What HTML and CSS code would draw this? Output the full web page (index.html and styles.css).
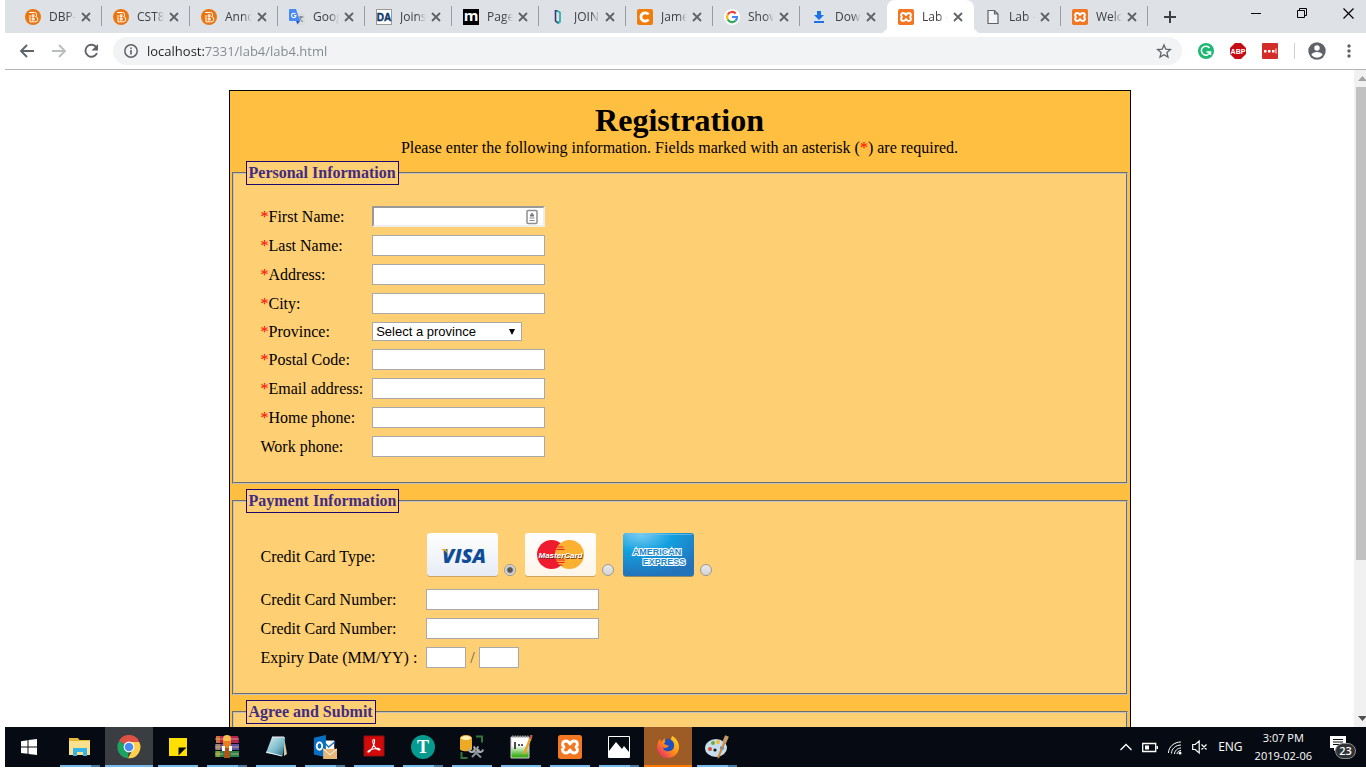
FILE: index.html
```html
<!DOCTYPE html>
<html lang="en">
<head>
<meta charset="utf-8">
<title>Lab 4</title>
<link rel="stylesheet" href="styles.css">
</head>
<body>
<svg class="defs" aria-hidden="true">
  <symbol id="x" viewBox="0 0 16 16"><path d="M4 4l8 8M12 4l-8 8" stroke="#5f6368" stroke-width="1.8"/></symbol>
  <symbol id="bright" viewBox="0 0 16 16"><circle cx="8" cy="8" r="8" fill="#ea7612"/><path d="M4 3.500H9.500a2.200 2.200 0 0 1 1.200 4A2.600 2.600 0 0 1 9.500 12.800H5V6M7.200 5.800H9v2H7.200zM7.200 9.200H9.200v1.800H7.200z" fill="none" stroke="#fff" stroke-width="1"/></symbol>
  <symbol id="xampp" viewBox="0 0 24 24"><rect width="24" height="24" rx="2.500" fill="#f37623"/><path d="M8 6c2 0 3 1.200 4 3 1-1.800 2-3 4-3 3.500 0 4.500 3.500 2 6 2.500 2.500 1.500 6-2 6-2 0-3-1.200-4-3-1 1.800-2 3-4 3-3.500 0-4.500-3.500-2-6-2.500-2.500-1.500-6 2-6z" fill="none" stroke="#fff" stroke-width="2.900" stroke-linejoin="round"/></symbol>
</svg>

<header class="tabstrip">
  <nav class="tabs" aria-label="Tabs">
    <div class="tab"><svg class="i16"><use href="#bright"/></svg><a class="title" href="#">DBP-</a><button class="close" aria-label="Close"><svg class="i16"><use href="#x"/></svg></button></div>
    <div class="tab wide"><svg class="i16"><use href="#bright"/></svg><a class="title" href="#">CST8</a><button class="close" aria-label="Close"><svg class="i16"><use href="#x"/></svg></button></div>
    <div class="tab wide"><svg class="i16"><use href="#bright"/></svg><a class="title" href="#">Anno</a><button class="close" aria-label="Close"><svg class="i16"><use href="#x"/></svg></button></div>
    <div class="tab"><svg class="i16" viewBox="0 0 16 16"><path d="M6 4h9a1 1 0 0 1 1 1v10a1 1 0 0 1-1 1H9z" fill="#dcdcdc"/><path d="M9.500 8h5M12 7v1c0 2-1 3.500-3 4.500M10.500 9.500c.5 1.500 2 2.500 3.500 3" fill="none" stroke="#607988"/><path d="M1 0h6l4 12H1a1 1 0 0 1-1-1V1a1 1 0 0 1 1-1z" fill="#4a8af4"/><path d="M7 12h4l-2.500 3.500z" fill="#2a56c6"/><path d="M6.500 5A2.200 2.200 0 1 0 7 6.500H5" fill="none" stroke="#fff" stroke-width="1.100"/></svg><a class="title" href="#">Goog</a><button class="close" aria-label="Close"><svg class="i16"><use href="#x"/></svg></button></div>
    <div class="tab"><svg class="i16" viewBox="0 0 16 16"><rect x=".5" y=".5" width="15" height="15" fill="#fff" stroke="#999"/><text x="8" y="12" class="logo-da">DA</text></svg><a class="title" href="#">Joins</a><button class="close" aria-label="Close"><svg class="i16"><use href="#x"/></svg></button></div>
    <div class="tab"><svg class="i16" viewBox="0 0 16 16"><rect width="16" height="16"/><text x="8" y="12" class="logo-m">m</text></svg><a class="title" href="#">Page</a><button class="close" aria-label="Close"><svg class="i16"><use href="#x"/></svg></button></div>
    <div class="tab"><svg class="i16" viewBox="0 0 16 16"><path d="M7.500 1.800H5.500V12l2.500 2.200" fill="none" stroke="#3b3a7e" stroke-width="1.600"/><path d="M7 1.800L10 3.500v9.300H8.500V15" fill="none" stroke="#17b0a3" stroke-width="1.600"/></svg><a class="title" href="#">JOIN</a><button class="close" aria-label="Close"><svg class="i16"><use href="#x"/></svg></button></div>
    <div class="tab"><svg class="i16" viewBox="0 0 16 16"><rect width="16" height="16" rx="2" fill="#f07c0b"/><path d="M11.500 5.500A4.200 4.200 0 1 0 11.500 10.500" fill="none" stroke="#fff" stroke-width="2.800"/></svg><a class="title" href="#">Jame</a><button class="close" aria-label="Close"><svg class="i16"><use href="#x"/></svg></button></div>
    <div class="tab"><svg class="i16" viewBox="0 0 16 16"><circle cx="8" cy="8" r="8" fill="#fff"/><g fill="none" stroke-width="2.200"><path d="M3.700 5.500A5 5 0 0 1 11.700 4.500" stroke="#ea4335"/><path d="M3.700 5.500a5 5 0 0 0 0 5" stroke="#fbbc05"/><path d="M3.700 10.500a5 5 0 0 0 7.800 1.300" stroke="#34a853"/><path d="M11.500 11.800A5 5 0 0 0 13 8H8" stroke="#4285f4"/></g></svg><a class="title" href="#">Show</a><button class="close" aria-label="Close"><svg class="i16"><use href="#x"/></svg></button></div>
    <div class="tab plain"><svg class="i16" viewBox="0 0 16 16"><path d="M6 2h4v4h3l-5 5-5-5h3zM3 12h10v2H3z" fill="#1a73e8"/></svg><a class="title" href="#">Down</a><button class="close" aria-label="Close"><svg class="i16"><use href="#x"/></svg></button></div>
    <div class="tab plain active"><svg class="i16"><use href="#xampp"/></svg><a class="title" href="#" aria-current="page">Lab -</a><button class="close" aria-label="Close"><svg class="i16"><use href="#x"/></svg></button></div>
    <div class="tab"><svg class="i16" viewBox="0 0 16 16"><path d="M3 1.500h6.500L13 5v9.500H3zM9.500 1.500V5H13" fill="#f4f5f6" stroke="#5f6368" stroke-width="1.200"/></svg><a class="title" href="#">Lab -</a><button class="close" aria-label="Close"><svg class="i16"><use href="#x"/></svg></button></div>
    <div class="tab"><svg class="i16"><use href="#xampp"/></svg><a class="title" href="#">Welc</a><button class="close" aria-label="Close"><svg class="i16"><use href="#x"/></svg></button></div>
    <button class="newtab" aria-label="New tab"><svg width="12" height="12"><path d="M6 0v12M0 6h12" stroke="#3c4043" stroke-width="2"/></svg></button>
  </nav>
  <div class="winctl">
    <button aria-label="Minimize"><svg width="11" height="11"><path d="M0 5.500h10" stroke="#000"/></svg></button>
    <button aria-label="Restore"><svg width="11" height="11"><path d="M.5 2.500h7v7h-7zM2.500 2.500v-2h7v7h-2" fill="none" stroke="#000"/></svg></button>
    <button aria-label="Close window"><svg width="11" height="11"><path d="M.5.5l10 10M10.500.5l-10 10" stroke="#000" stroke-width="1.200"/></svg></button>
  </div>
</header>

<div class="toolbar">
  <div class="nav">
    <button aria-label="Back"><svg class="i16" viewBox="0 0 16 16"><path d="M15 8H2M8 2L2 8l6 6" fill="none" stroke="#5f6368" stroke-width="1.900"/></svg></button>
    <button aria-label="Forward"><svg class="i16" viewBox="0 0 16 16"><path d="M1 8h13M8 2l6 6-6 6" fill="none" stroke="#babcbe" stroke-width="1.900"/></svg></button>
    <button aria-label="Reload"><svg class="i16" viewBox="0 0 16 16"><path d="M13.500 4.500A6 6 0 1 0 14 10" fill="none" stroke="#5f6368" stroke-width="1.900"/><path d="M15 1v6.500H8.500z" fill="#5f6368"/></svg></button>
  </div>
  <div class="omnibox">
    <svg class="i16" viewBox="0 0 16 16"><circle cx="8" cy="8" r="6.200" fill="none" stroke="#5f6368" stroke-width="1.500"/><path d="M8 7v4.500M8 4.500v1.600" stroke="#5f6368" stroke-width="1.600"/></svg>
    <input class="url" type="text" aria-label="Address" value="localhost:7331/lab4/lab4.html">
    <button aria-label="Bookmark"><svg class="i16" viewBox="0 0 16 16"><path d="M8 2l1.800 4.200 4.600.4-3.500 3 1.100 4.500L8 11.700l-4 2.400 1.100-4.500-3.500-3 4.600-.4z" fill="none" stroke="#5f6368" stroke-width="1.300"/></svg></button>
  </div>
  <div class="ext">
    <button aria-label="Grammarly"><svg class="i16" viewBox="0 0 16 16"><circle cx="8" cy="8" r="8" fill="#1eb774"/><path d="M11.500 5A4.500 4.500 0 1 0 12 9.500M8.500 9h4v3" fill="none" stroke="#fff" stroke-width="1.500"/></svg></button>
    <button aria-label="AdBlock"><svg class="i16" viewBox="0 0 16 16"><path d="M5 0h6l5 5v6l-5 5H5l-5-5V5z" fill="#c70d14"/><text x="8" y="11" class="logo-abp">ABP</text></svg></button>
    <button aria-label="LastPass"><svg class="i16" viewBox="0 0 16 16"><rect width="16" height="16" rx="1" fill="#d32d27"/><path d="M2 7h2.500v2.500H2zM6 7h2.500v2.500H6zM10 7h2.500v2.500H10zM13.500 5.500h1v5h-1z" fill="#fff"/></svg></button>
  </div>
  <div class="profile">
    <button aria-label="Profile"><svg width="18" height="18" viewBox="0 0 18 18"><circle cx="9" cy="9" r="8.700" fill="#5f6368"/><circle cx="9" cy="6" r="2.700" fill="#fff"/><path d="M3.500 13c0-2 3.500-3 5.500-3s5.500 1 5.500 3a7 7 0 0 1-11 0z" fill="#fff"/></svg></button>
    <button aria-label="Menu"><svg class="i16" viewBox="0 0 16 16"><g fill="#5f6368"><circle cx="8" cy="3" r="1.700"/><circle cx="8" cy="8" r="1.700"/><circle cx="8" cy="13" r="1.700"/></g></svg></button>
  </div>
</div>

<main class="viewport">
  <div class="page">
    <form class="form">
      <h1>Registration</h1>
      <p class="intro">Please enter the following information. Fields marked with an asterisk (<span class="req">*</span>) are required.</p>
      <fieldset>
        <legend>Personal Information</legend>
        <div class="fields">
          <label for="first"><span class="req">*</span>First Name:</label>
          <div class="autofill"><input id="first" class="text first" type="text"><svg class="key" viewBox="0 0 12 16"><rect x="1" y="1.500" width="10" height="13" rx="1" fill="#fff" stroke="#8e8e8e" stroke-width="1.500"/><path d="M4 5.500h4v2H4zM5.200 4h1.600v2H5.200z" fill="#777"/><path d="M3.500 9h5M3.500 11.500h5" stroke="#888" stroke-width="1.200"/></svg></div>
          <label for="last"><span class="req">*</span>Last Name:</label><input id="last" class="text" type="text">
          <label for="addr"><span class="req">*</span>Address:</label><input id="addr" class="text" type="text">
          <label for="city"><span class="req">*</span>City:</label><input id="city" class="text" type="text">
          <label for="prov"><span class="req">*</span>Province:</label>
          <select id="prov"><option>Select a province</option></select>
          <label for="post"><span class="req">*</span>Postal Code:</label><input id="post" class="text" type="text">
          <label for="email"><span class="req">*</span>Email address:</label><input id="email" class="text" type="text">
          <label for="home"><span class="req">*</span>Home phone:</label><input id="home" class="text" type="text">
          <label for="work">Work phone:</label><input id="work" class="text" type="text">
        </div>
      </fieldset>
      <fieldset>
        <legend>Payment Information</legend>
        <div class="fields payment">
          <span id="cardtype">Credit Card Type:</span>
          <div class="cards" role="radiogroup" aria-labelledby="cardtype">
            <label for="visa"><svg class="card" role="img" aria-label="Visa" viewBox="0 0 72 44">
              <defs><linearGradient id="gv" x2="0" y2="1"><stop stop-color="#fff"/><stop offset="1" stop-color="#e6ecf5"/></linearGradient></defs>
              <rect x="1" y="1" width="71" height="43" rx="3" fill="#cda55c"/><rect x="1" width="71" height="43" rx="3" fill="url(#gv)"/>
              <text x="38" y="30" class="logo-visa">VISA</text><path d="M14.500 16h5.500l2.500 6c-2-3-4-5-8-6z" fill="#f7a51b"/></svg></label>
            <input id="visa" type="radio" name="card" checked>
            <label for="mc"><svg class="card" role="img" aria-label="MasterCard" viewBox="0 0 72 44">
              <defs><linearGradient id="gm" x2="0" y2="1"><stop stop-color="#fff"/><stop offset="1" stop-color="#fdf5e8"/></linearGradient></defs>
              <rect x="1" y="1" width="71" height="43" rx="3" fill="#cda55c"/><rect x="1" width="71" height="43" rx="3" fill="url(#gm)"/>
              <circle cx="27.500" cy="21.500" r="14.500" fill="#ee1c2e"/><circle cx="45.500" cy="21.500" r="14.500" fill="#fcb131"/>
              <path d="M33.500 14h6M32.500 16.500h8M32 27h9M32.500 29.500h8M34.500 32h4" stroke="#ee1c2e"/>
              <text x="37" y="25.500" class="logo-mc shade">MasterCard</text><text x="36.500" y="24.500" class="logo-mc">MasterCard</text></svg></label>
            <input id="mc" type="radio" name="card">
            <label for="amex"><svg class="card" role="img" aria-label="American Express" viewBox="0 0 72 44">
              <defs><radialGradient id="ga" cx=".25" cy="0" r="1"><stop stop-color="#7fd0f4"/><stop offset=".45" stop-color="#12a0df"/><stop offset="1" stop-color="#2373bb"/></radialGradient></defs>
              <rect x="1" y="1" width="71" height="43" rx="3" fill="#8f8e65"/><rect x="1" width="71" height="43" rx="3" fill="url(#ga)"/>
              <path d="M3 1.500h67" stroke="#73bce7" stroke-width=".8"/>
              <text x="35" y="21.500" class="logo-amex">AMERICAN</text><text x="42" y="32" class="logo-amex">EXPRESS</text></svg></label>
            <input id="amex" type="radio" name="card">
          </div>
          <label for="cc1">Credit Card Number:</label><input id="cc1" class="text" type="text">
          <label for="cc2">Credit Card Number:</label><input id="cc2" class="text" type="text">
          <label for="mm">Expiry Date (MM/YY) :</label>
          <div class="expiry"><input id="mm" class="text" type="text"><span>/</span><input class="text" type="text" aria-label="Expiry year"></div>
        </div>
      </fieldset>
      <fieldset>
        <legend>Agree and Submit</legend>
        <div class="fields"></div>
      </fieldset>
    </form>
  </div>
  <div class="scrollbar" aria-hidden="true">
    <svg width="17" height="17"><path d="M4 11h9L8.500 6z" fill="#a3a3a3"/></svg>
    <div class="track"><div class="thumb"></div></div>
    <svg width="17" height="17"><path d="M4 6h9l-4.500 5z" fill="#505050"/></svg>
  </div>
</main>

<footer class="taskbar">
  <div class="apps">
    <button class="app start" aria-label="Start"><svg class="i24" viewBox="0 0 24 24"><path d="M4 6.300l6.500-1V11.500H4zM11.500 5.100L20 4v7.500h-8.500zM4 12.500h6.500v6.300L4 17.900zM11.500 12.500H20V20l-8.500-1.100z" fill="#fff"/></svg></button>
    <button class="app run multi" aria-label="File Explorer"><svg class="i24" viewBox="0 0 24 24"><path d="M1 3h9l1.500 2H22v4H1z" fill="#e8b931"/><path d="M1 6h21v14H1z" fill="#fbe08e"/><path d="M5 13h14v8h-4v-4H9v4H5z" fill="#35b4e8"/></svg></button>
    <button class="app run current" aria-label="Chrome"><svg class="i24" viewBox="0 0 24 24"><path d="M12 12L2 6a11.300 11.300 0 0 1 20 0z" fill="#dd5144"/><path d="M12 12L2.100 6A11.300 11.300 0 0 0 11 23.300z" fill="#1ca261"/><path d="M12 7h10.200A11.300 11.300 0 0 1 11 23.300L16 14z" fill="#ffd04b"/><path d="M2.200 6A11.300 11.300 0 0 1 22.200 7H12z" fill="#dd5144"/><circle cx="12" cy="12" r="5.400" fill="#fff"/><circle cx="12" cy="12" r="4.300" fill="#4a8af4"/></svg></button>
    <button class="app run" aria-label="Sticky Notes"><svg class="i24" viewBox="0 0 24 24"><path d="M3 3h18v18H3z" fill="#ffe000"/><path d="M12.500 12.500H20.500l-8 8z" fill="#060a12"/></svg></button>
    <button class="app run multi" aria-label="WinRAR"><svg class="i24" viewBox="0 0 24 24"><path d="M1 1h22l1 7H1z" fill="#b52452"/><path d="M0 9h24v6H0z" fill="#5952a3"/><path d="M0 16h24v6H0z" fill="#27834b"/><path d="M0 4h8M16 4h8M0 12h8M16 12h8M0 19h8M16 19h8" stroke="#dfb18b" stroke-width=".8"/><path d="M2 1v7M4 1v7M2 9v6M4 9v6M2 16v6M4 16v6" stroke="#e6ba35"/><path d="M9 1h6v22H9z" fill="#a9541d"/><circle cx="12" cy="4" r="4" fill="#f7c04d"/><path d="M8 6h8v7H8z" fill="#e7811f"/><path d="M7 11h3v5H7zM14 11h3v5h-3z" fill="#fff"/></svg></button>
    <button class="app run" aria-label="Notepad"><svg class="i24" viewBox="0 0 24 24"><defs><linearGradient id="np" x2="1" y2="1"><stop stop-color="#d9f2f5"/><stop offset=".6" stop-color="#78b8c8"/><stop offset="1" stop-color="#23657b"/></linearGradient></defs><path d="M20 2l3 17-3 2z" fill="#d9c9a0"/><path d="M8 2h13l-2 19-17-3z" fill="url(#np)"/><path d="M8 2h12M2 17l16 4" stroke="#f3f3f3"/></svg></button>
    <button class="app run multi" aria-label="Outlook"><svg class="i24" viewBox="0 0 26 26"><path d="M12 6h11v11H12z" fill="#fff"/><path d="M13 9l4 4 7-6" stroke="#1572c4" stroke-width="1.500" fill="none"/><path d="M1 3l13-3v24L1 21z" fill="#0870c4"/><ellipse cx="7" cy="12" rx="3" ry="4" fill="none" stroke="#fff" stroke-width="2"/><path d="M11 15h15v11H11z" fill="#e8b777"/><path d="M11 15l7.500 6.500L26 15" fill="none" stroke="#fff"/></svg></button>
    <button class="app run" aria-label="Acrobat"><svg class="i24" viewBox="0 0 24 24"><path d="M2 1h20v20H2z" fill="#d20a0a" stroke="#8b1010"/><path d="M11 5c2-2 2 2 .7 5C10 14 7 18 6 17s4-3 8-3.500 5 1.500 3 1.500-5.500-4-6-7c-.3-1.500-.2-2.500 0-3z" fill="none" stroke="#fff" stroke-width="1.100"/></svg></button>
    <button class="app run multi" aria-label="Text editor"><svg class="i24" viewBox="0 0 24 24"><circle cx="12" cy="12" r="12" fill="#079b90"/><text x="12" y="18" class="logo-t">T</text></svg></button>
    <button class="app run" aria-label="SQL tools"><svg class="i24" viewBox="0 0 24 24"><path d="M16 1.500h6v6M1.500 17v6h6" fill="none" stroke="#32753a" stroke-width="2"/><path d="M0 3v11c0 3 12 3 12 0V3z" fill="#edaa22"/><ellipse cx="6" cy="3" rx="5.500" ry="2.500" fill="#fff0b8" stroke="#e3ab29"/><path d="M12 22l7.500-7.500M13 15l8 7.500" stroke="#8b9299" stroke-width="2"/><path d="M18.500 11.500a3 3 0 1 0 4.500 3M9 13a3 3 0 1 0 4.500-1.500" fill="none" stroke="#a8adb2" stroke-width="2"/></svg></button>
    <button class="app run" aria-label="Notepad++"><svg class="i24" viewBox="0 0 24 24"><defs><linearGradient id="ng" x2="0" y2="1"><stop offset=".4" stop-color="#fff"/><stop offset=".9" stop-color="#3fae18"/></linearGradient></defs><path d="M2 2h18v21H2z" fill="url(#ng)" stroke="#ccc"/><path d="M3 1.500h17" stroke="#999" stroke-dasharray="1.500 1" stroke-width="2"/><path d="M6 7v7M9 10h2M12 10h2" stroke="#222" stroke-width="1.600"/><path d="M22 2l-7 17" stroke="#e8a32d" stroke-width="2.500"/><path d="M22.500 0l-1 4" stroke="#b85750" stroke-width="2.500"/></svg></button>
    <button class="app run" aria-label="XAMPP"><svg class="i24"><use href="#xampp"/></svg></button>
    <button class="app run multi" aria-label="Photos"><svg class="i24" viewBox="0 0 24 24"><path d="M1.500 1.500h21v21h-21z" fill="#060a12" stroke="#fff"/><path d="M2 22v-6l7-9 6 7 2-3 5 6v5z" fill="#fff"/></svg></button>
    <button class="app run firefox" aria-label="Firefox"><svg class="i24" viewBox="0 0 24 24"><defs><linearGradient id="ff" x1="1" x2="0" y2="1"><stop stop-color="#ffe226"/><stop offset=".5" stop-color="#ff8a16"/><stop offset="1" stop-color="#e31587"/></linearGradient></defs><path d="M16 1c4 2 7 6 7 11a11 11 0 0 1-22 0c0-3 1-6 3-8l1 3 4-4c-1 2 0 4 2 4s4-2 5-6z" fill="url(#ff)"/><path d="M10 4c5-1 9 3 8 8-1 4-5 5-8 4-2-1-3-2-3-4 1 2 4 1 6-1l-5-2 1-2z" fill="#1f4fc0"/></svg></button>
    <button class="app run multi" aria-label="Paint"><svg class="i24" viewBox="0 0 24 24"><ellipse cx="11" cy="13" rx="11" ry="9" fill="#c6deec"/><circle cx="5" cy="14" r="2" fill="#d84f3b"/><circle cx="8" cy="8" r="2" fill="#6fae3d"/><circle cx="13" cy="7" r="2" fill="#f1bc36"/><circle cx="10" cy="15" r="1.600" fill="#101820"/><circle cx="17" cy="13" r="2" fill="#3b83c8"/><path d="M20 6l-7 17" stroke="#d18838" stroke-width="2"/><path d="M22 1l-3 7" stroke="#c69a6c" stroke-width="4"/></svg></button>
  </div>
  <div class="tray">
    <button aria-label="Show hidden icons"><svg width="12" height="16"><path d="M.5 11L6 5.500 11.500 11" fill="none" stroke="#fff" stroke-width="1.300"/></svg></button>
    <button aria-label="Battery"><svg width="16" height="16"><path d="M.7 4.500h13v8H.7z" fill="none" stroke="#fff" stroke-width="1.300"/><path d="M3 6.500h4v4H3zM14.500 7H16v3h-1.500z" fill="#fff"/></svg></button>
    <button aria-label="Wi-Fi"><svg width="14" height="16"><g fill="none" stroke="#fff"><path d="M.5 14C.5 8 6 3 13 3"/><path d="M3.500 14.500c0-4.500 4-8.500 9.500-8.500"/><path d="M6.500 15c0-3 3-6 6.500-6"/><path d="M9 15c0-2 2-3.500 4-3.500"/></g><circle cx="12" cy="14" r="1.500" fill="#fff"/></svg></button>
    <button aria-label="Muted"><svg width="16" height="16"><path d="M.7 5.500h2.500l4-3.500v12l-4-3.500H.7zM9.500 5.500l5 5M14.500 5.500l-5 5" fill="none" stroke="#fff" stroke-width="1.200"/></svg></button>
    <span>ENG</span>
    <div class="clock"><time>3:07 PM</time><time>2019-02-06</time></div>
    <button class="notify" aria-label="Notifications"><svg width="16" height="16"><path d="M0 1h16v12H8l-4 3v-3H0z" fill="#fff"/><path d="M3 4.500h10M3 7h10M3 9.500h7" stroke="#080c13" stroke-width="1.200"/></svg><span class="badge">23</span></button>
  </div>
</footer>
</body>
</html>
```
FILE: styles.css
```css
* { box-sizing: border-box; }
html, body { height: 100%; }
body {
  margin: 0;
  padding: 0 0 1px 5px;
  display: flex;
  flex-direction: column;
  overflow: hidden;
  background: #fff;
  font: 12px/16px "Open Sans", "Noto Sans", sans-serif;
}
button {
  padding: 0;
  border: 0;
  background: none;
  font: inherit;
  color: inherit;
  display: flex;
  align-items: center;
  justify-content: center;
}
svg { display: block; flex: none; }
.defs { width: 0; height: 0; position: absolute; }
.i16 { width: 16px; height: 16px; }
.i24 { width: 24px; height: 24px; }

/* Tab strip */
.tabstrip {
  flex: none;
  height: 33px;
  background: #dee1e6;
  display: flex;
  justify-content: space-between;
}
.tabs { display: flex; padding-left: 10px; }
.tab {
  width: 87px;
  display: flex;
  align-items: center;
  padding: 0 8px 0 11px;
  background: linear-gradient(#999da2, #999da2) right 6px / 1px 20px no-repeat;
}
.tab.wide { width: 88px; }
.tab:first-child { padding-left: 10px; }
.tab.plain { background: none; }
.tab.active { position: relative; background: #fff; border-radius: 8px 8px 0 0; }
.tab.active::before, .tab.active::after {
  content: "";
  position: absolute;
  bottom: 0;
  width: 7px;
  height: 7px;
}
.tab.active::before { right: 100%; background: radial-gradient(circle at 0 0, transparent 7px, #fff 7px); }
.tab.active::after { left: 100%; background: radial-gradient(circle at 100% 0, transparent 7px, #fff 7px); }
.title {
  flex: 1;
  margin-left: 8px;
  overflow: hidden;
  white-space: nowrap;
  color: #3c4043;
  text-decoration: none;
  -webkit-mask-image: linear-gradient(to right, #000 65%, transparent);
  mask-image: linear-gradient(to right, #000 65%, transparent);
}
.close { margin-left: 2px; }
.newtab { width: 44px; }
.winctl { display: flex; margin-right: -5px; }
.winctl button { width: 46px; height: 27px; }

.logo-da, .logo-m, .logo-abp, .logo-visa, .logo-mc, .logo-amex, .logo-t { text-anchor: middle; font-weight: 700; }
.logo-da { font-family: "Liberation Sans", sans-serif; font-size: 10px; fill: #10396b; stroke: #10396b; stroke-width: .4px; }
.logo-m { font-family: "Open Sans", sans-serif; font-size: 15px; fill: #fff; }
.logo-abp { font-family: "Liberation Sans", sans-serif; font-size: 7px; fill: #fff; }
.logo-visa { font: italic 800 20px "Open Sans", sans-serif; fill: #0e4c96; }
.logo-mc { font: italic 700 8px "Liberation Sans", sans-serif; fill: #fff; }
.logo-mc.shade { fill: #5e2925; }
.logo-amex { font: 700 9px "Liberation Sans", sans-serif; fill: #1c86cb; stroke: #fff; stroke-width: 2px; paint-order: stroke; }
.logo-t { font-family: "Liberation Serif", serif; font-size: 18px; fill: #fff; }

/* Toolbar */
.toolbar {
  flex: none;
  height: 37px;
  border-bottom: 1px solid #b3b4b6;
  display: flex;
  align-items: center;
  padding: 0 9px 0 14px;
}
.nav, .ext { display: flex; gap: 16px; }
.omnibox {
  flex: 1;
  margin: 0 16px 0 14px;
  height: 28px;
  border-radius: 14px;
  background: #f1f3f4;
  display: flex;
  align-items: center;
  padding: 0 10px;
  gap: 8px;
}
.url {
  flex: 1;
  min-width: 0;
  padding: 0;
  border: 0;
  outline: 0;
  font: 13px/18px "Open Sans", "Noto Sans", sans-serif;
  color: transparent;
  background: linear-gradient(to right, #202124 58px, #80868b 58px);
  -webkit-background-clip: text;
  background-clip: text;
}
.profile {
  display: flex;
  align-items: center;
  gap: 15px;
  margin-left: 16px;
  padding-left: 14px;
  background: linear-gradient(#ced1d4, #ced1d4) left / 1px 16px no-repeat;
}

/* Web page */
.viewport { flex: 1; min-height: 0; display: flex; overflow: hidden; }
.page {
  flex: 1;
  overflow: hidden;
  padding: 20px;
  font: 16px/18px "Liberation Serif", "Times New Roman", serif;
  color: #000;
}
.form {
  max-width: 902px;
  margin: 0 auto;
  padding: 10px 2px;
  border: 1px solid #000;
  background: #ffbf40;
}
h1 { margin: 0; font-size: 32px; line-height: 38px; text-align: center; }
.intro { margin: 0 0 4px; text-align: center; }
.req { color: #f00; }
fieldset {
  margin: 0 0 5px;
  padding: 0 12px;
  border: 2px groove #c0c0c0;
  background: #ffcf73;
}
legend {
  padding: 2px;
  border: 1px solid #1c0772;
  background: #ffcf73;
  color: #412c84;
  font-weight: 700;
}
.fields {
  display: grid;
  grid-template-columns: auto 1fr;
  gap: 8px 9px;
  align-items: center;
  justify-items: start;
  padding: 21px 15px 25px;
}
.fields.payment { padding-top: 20px; }
.text {
  width: 173px;
  height: 21px;
  padding: 1px 3px;
  border: 1px solid #a9a9a9;
  background: #fff;
  font: 13px "Liberation Sans", Arial, sans-serif;
}
.text.first { border: 2px inset #eee; display: block; }
.autofill { position: relative; }
.key { position: absolute; right: 7px; top: 3px; width: 12px; height: 16px; }
select {
  appearance: none;
  width: 150px;
  height: 19px;
  padding: 0 3px;
  border: 1px solid #a9a9a9;
  border-radius: 0;
  color: #000;
  font: 13px "Liberation Sans", Arial, sans-serif;
  background: #fff url("data:image/svg+xml,%3Csvg xmlns='http://www.w3.org/2000/svg' width='6' height='6'%3E%3Cpath d='M0 0h6L3 6z'/%3E%3C/svg%3E") right 6px center no-repeat;
}
.cards { display: flex; align-items: flex-end; height: 48px; padding-bottom: 4px; }
.card { width: 72px; height: 44px; }
.cards input {
  appearance: none;
  width: 12px;
  height: 12px;
  margin: 0 8px 1px 6px;
  border: 1px solid #999;
  border-radius: 50%;
  background: linear-gradient(#e8e8e8, #d4d4d4);
}
.cards input:checked { background: radial-gradient(circle, #555 2px, #ddd 4px); }
.expiry { display: flex; align-items: center; gap: 4px; color: #555; }
.expiry .text { width: 40px; }

.scrollbar {
  flex: none;
  width: 17px;
  margin-right: -5px;
  background: #f1f1f1;
  display: flex;
  flex-direction: column;
}
.track { flex: 1; padding: 0 2px; }
.thumb { height: 76%; background: #c1c1c1; }

/* Taskbar */
.taskbar {
  flex: none;
  height: 40px;
  background: #060b13;
  color: #fff;
  display: flex;
  justify-content: space-between;
}
.apps { display: flex; gap: 1px; }
.app { width: 48px; }
.start { margin-right: 2px; }
.run { background: linear-gradient(#76b9ed, #76b9ed) center bottom / 40px 2px no-repeat; }
.run.multi { background-image: linear-gradient(to right, #76b9ed 31px, #4a7ba3 31px); }
.run.current { background: #3a3e42; border-bottom: 2px solid #76b9ed; padding-top: 2px; }
.run.firefox { background: #9d5b26; border-bottom: 2px solid #ff7800; padding-top: 2px; }
.tray { display: flex; align-items: center; gap: 10px; padding-right: 10px; }
.clock {
  display: flex;
  flex-direction: column;
  text-align: center;
  font-size: 11px;
  line-height: 18px;
  margin: 0 8px 0 2px;
}
.notify { position: relative; width: 26px; height: 24px; align-items: flex-start; justify-content: flex-start; }
.badge {
  position: absolute;
  left: 5px;
  top: 8px;
  width: 21px;
  height: 16px;
  border: 1px solid #8b8b8b;
  border-radius: 8px;
  background: #303236;
  font-size: 11px;
  font-weight: 600;
  line-height: 14px;
  text-align: center;
}
```
